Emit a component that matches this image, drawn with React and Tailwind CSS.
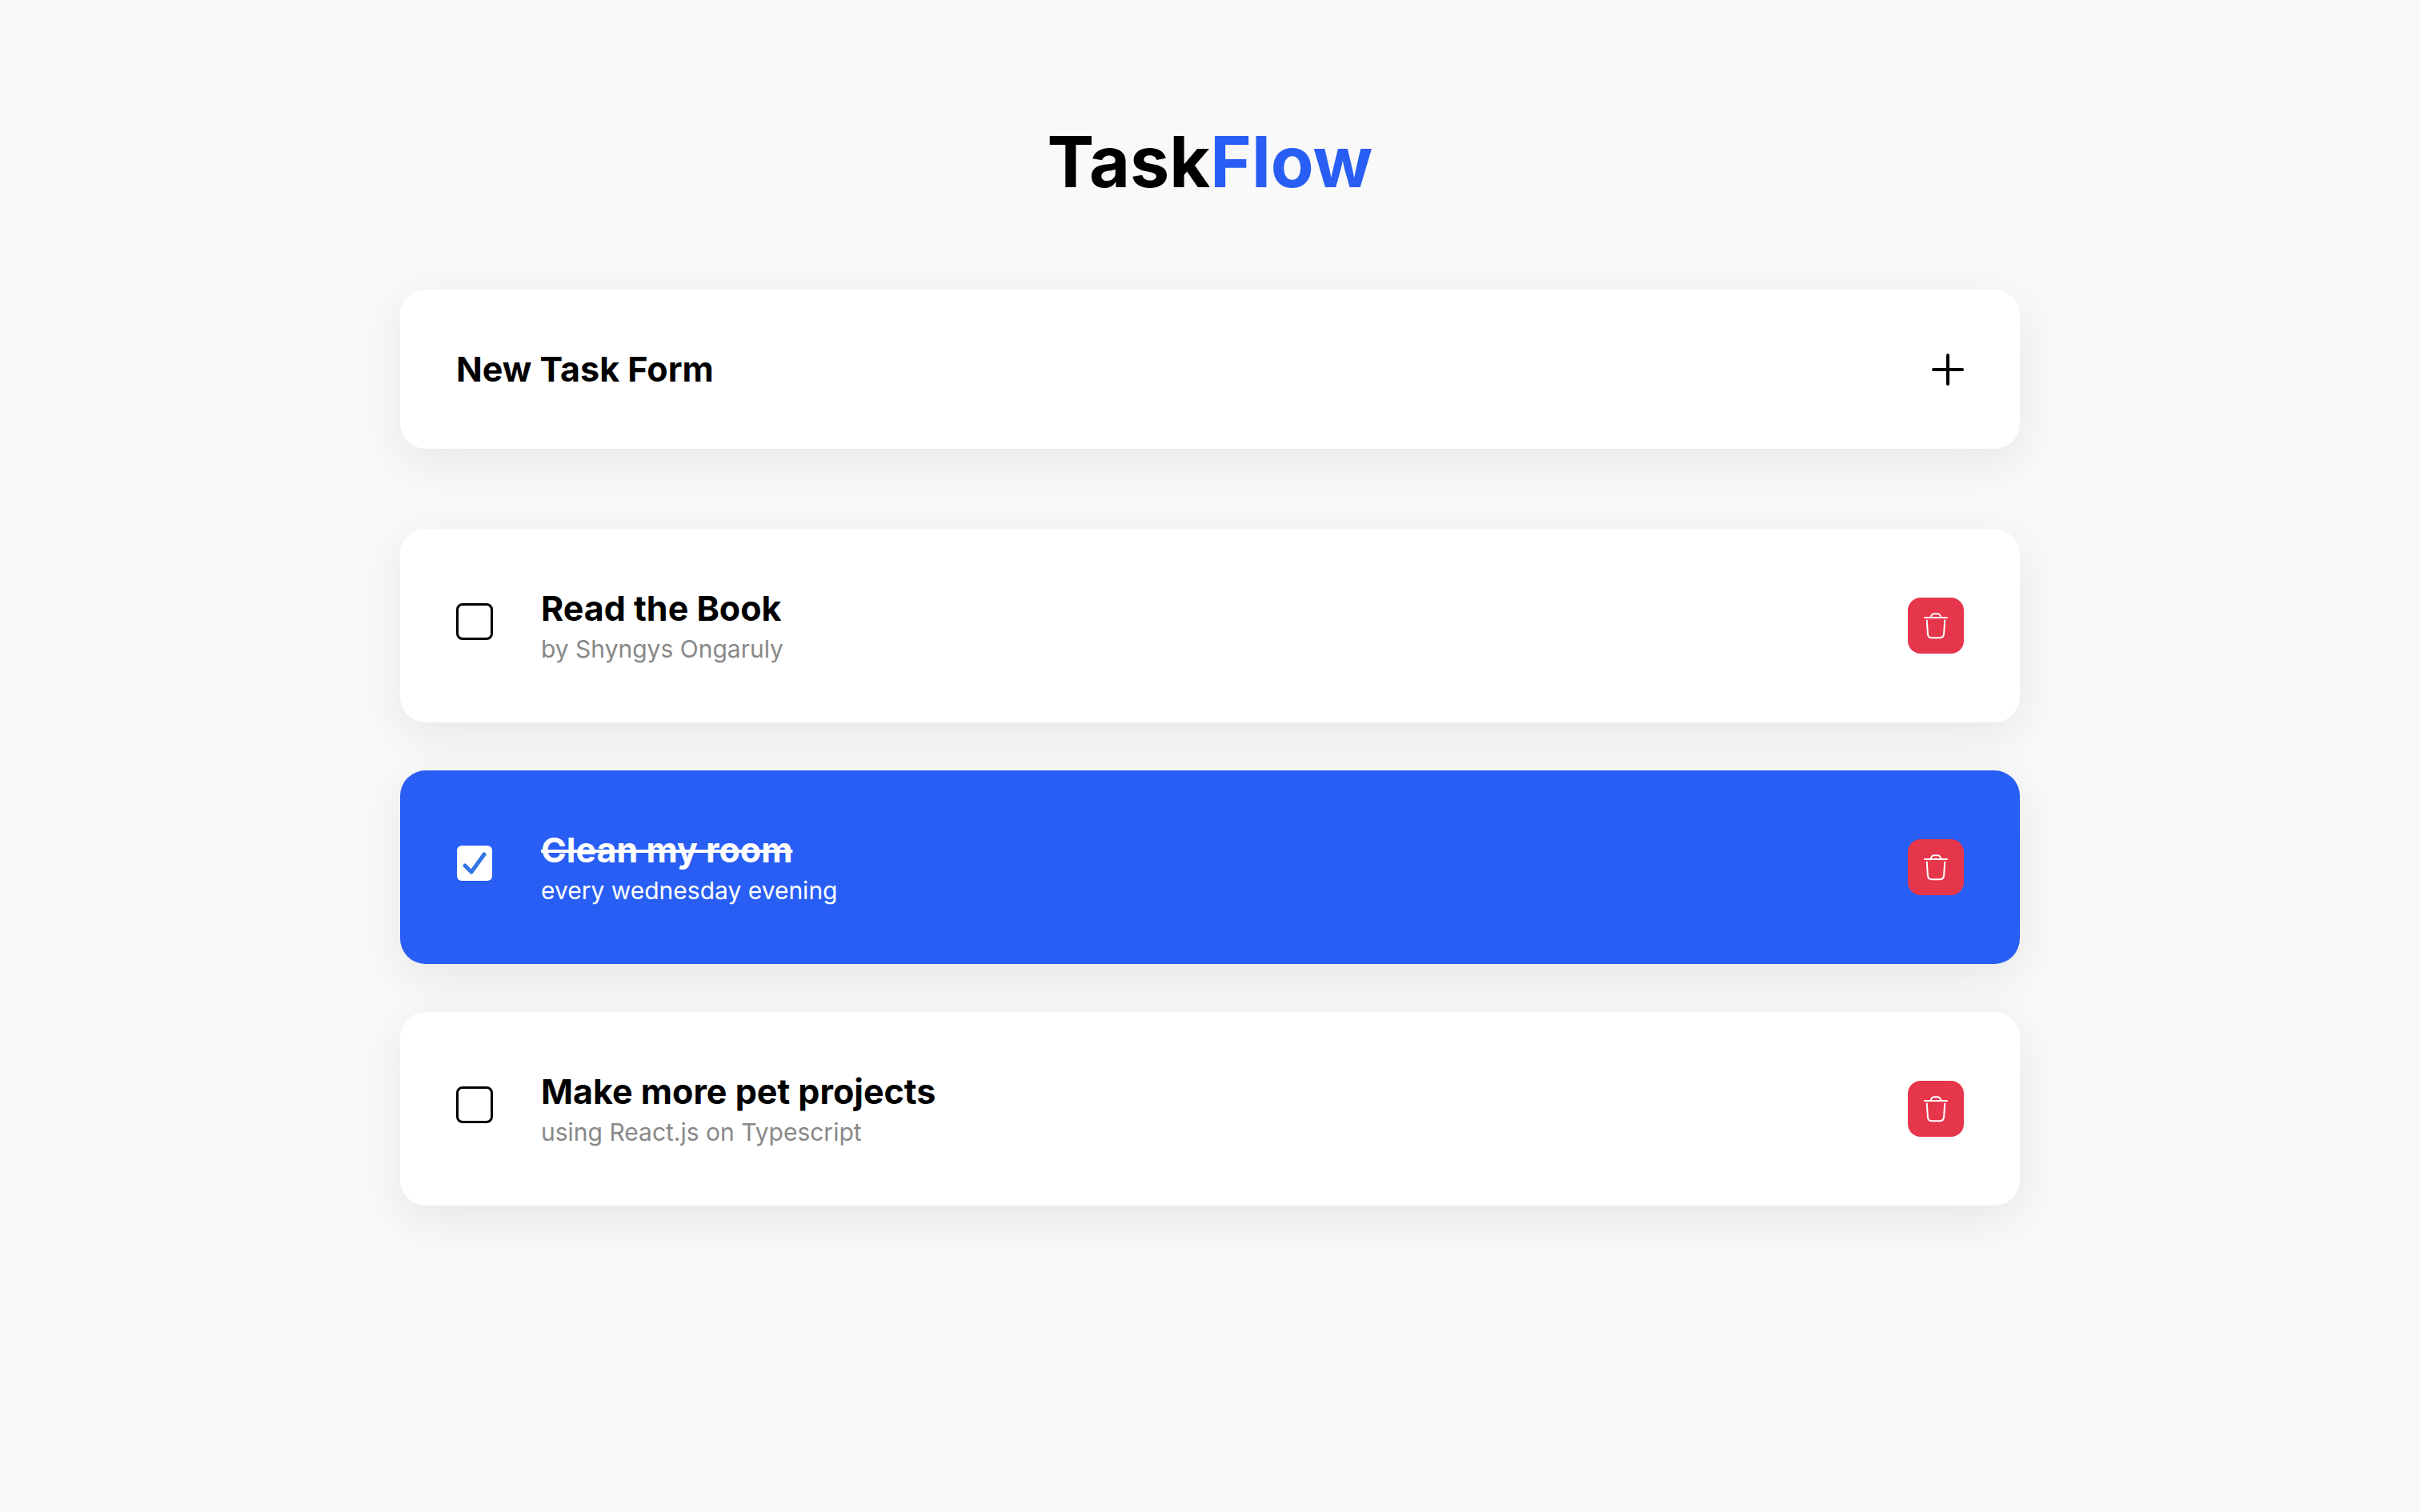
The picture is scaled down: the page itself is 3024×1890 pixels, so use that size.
import { useState } from "react";

const initialTasks = [
  { id: 1, title: "Read the Book", note: "by Shyngys Ongaruly", done: false },
  { id: 2, title: "Clean my room", note: "every wednesday evening", done: true },
  { id: 3, title: "Make more pet projects", note: "using React.js on Typescript", done: false },
];

function PlusIcon() {
  return (
    <svg viewBox="0 0 40 40" fill="none" stroke="currentColor" strokeWidth="4" strokeLinecap="round" className="size-10" aria-hidden="true">
      <path d="M20 2v36M2 20h36" />
    </svg>
  );
}

function TrashIcon() {
  return (
    <svg viewBox="0 0 36 36" fill="none" stroke="currentColor" strokeWidth="2" strokeLinecap="round" strokeLinejoin="round" className="size-9" aria-hidden="true">
      <path d="M4 8h28" />
      <path d="M11.6 7.4l1-2.2c.5-1.2 1.2-1.9 2.6-1.9h5.6c1.4 0 2.1.7 2.6 1.9l1 2.2" />
      <path d="M6.8 11.6l1.1 16.6c.3 3.6 1.8 5 4.8 5h10.6c3 0 4.5-1.4 4.8-5l1.1-16.6" />
    </svg>
  );
}

function TaskCard({ task, onToggle, onDelete }) {
  const id = `task-${task.id}`;
  return (
    <li
      className={`flex items-center justify-between rounded-[32px] p-[70px] shadow-[0_16px_60px_rgba(0,0,0,0.08)] ${
        task.done ? "bg-[#285ef3] text-white" : "bg-white text-black"
      }`}
    >
      <div className="flex items-start gap-[60px]">
        <span className="mt-[23px] grid size-[46px] place-items-center">
          <input
            id={id}
            type="checkbox"
            checked={task.done}
            onChange={onToggle}
            className="col-start-1 row-start-1 size-[46px] appearance-none rounded-lg border-[3px] border-black bg-white checked:size-11 checked:rounded-md checked:border-0"
          />
          {task.done && (
            <svg viewBox="0 0 44 44" fill="none" stroke="#3475e4" strokeWidth="5" strokeLinecap="round" strokeLinejoin="round" className="pointer-events-none col-start-1 row-start-1 size-11" aria-hidden="true">
              <path d="M10 25l8 8L34 11" />
            </svg>
          )}
        </span>
        <div>
          <label
            htmlFor={id}
            className={`block text-[43px] leading-[59px] font-bold ${task.done ? "line-through decoration-4" : ""}`}
          >
            {task.title}
          </label>
          <p className={`text-[30px] leading-[43px] ${task.done ? "text-white" : "text-[#888888]"}`}>{task.note}</p>
        </div>
      </div>
      <button
        type="button"
        aria-label={`Delete ${task.title}`}
        onClick={onDelete}
        className="grid size-[70px] shrink-0 place-items-center rounded-2xl bg-[#e6364b] text-white"
      >
        <TrashIcon />
      </button>
    </li>
  );
}

export default function App() {
  const [tasks, setTasks] = useState(initialTasks);
  const toggle = (id) => setTasks(tasks.map((t) => (t.id === id ? { ...t, done: !t.done } : t)));
  const remove = (id) => setTasks(tasks.filter((t) => t.id !== id));

  return (
    <div className="min-h-screen bg-[#f9f9f9] font-['Inter',sans-serif] text-black">
      <main className="mx-auto w-full max-w-[2024px] pt-[142px] pb-[142px]">
        <h1 className="mb-[100px] text-center text-[88px] leading-[120px] font-bold">
          Task<span className="text-[#285ef3]">Flow</span>
        </h1>
        <section className="mb-[100px] flex items-center justify-between rounded-[32px] bg-white p-[70px] shadow-[0_16px_60px_rgba(0,0,0,0.08)]">
          <h2 className="text-[43px] leading-[59px] font-bold">New Task Form</h2>
          <button type="button" aria-label="Open the new task form">
            <PlusIcon />
          </button>
        </section>
        <ul className="flex flex-col gap-[60px]">
          {tasks.map((task) => (
            <TaskCard key={task.id} task={task} onToggle={() => toggle(task.id)} onDelete={() => remove(task.id)} />
          ))}
        </ul>
      </main>
    </div>
  );
}
